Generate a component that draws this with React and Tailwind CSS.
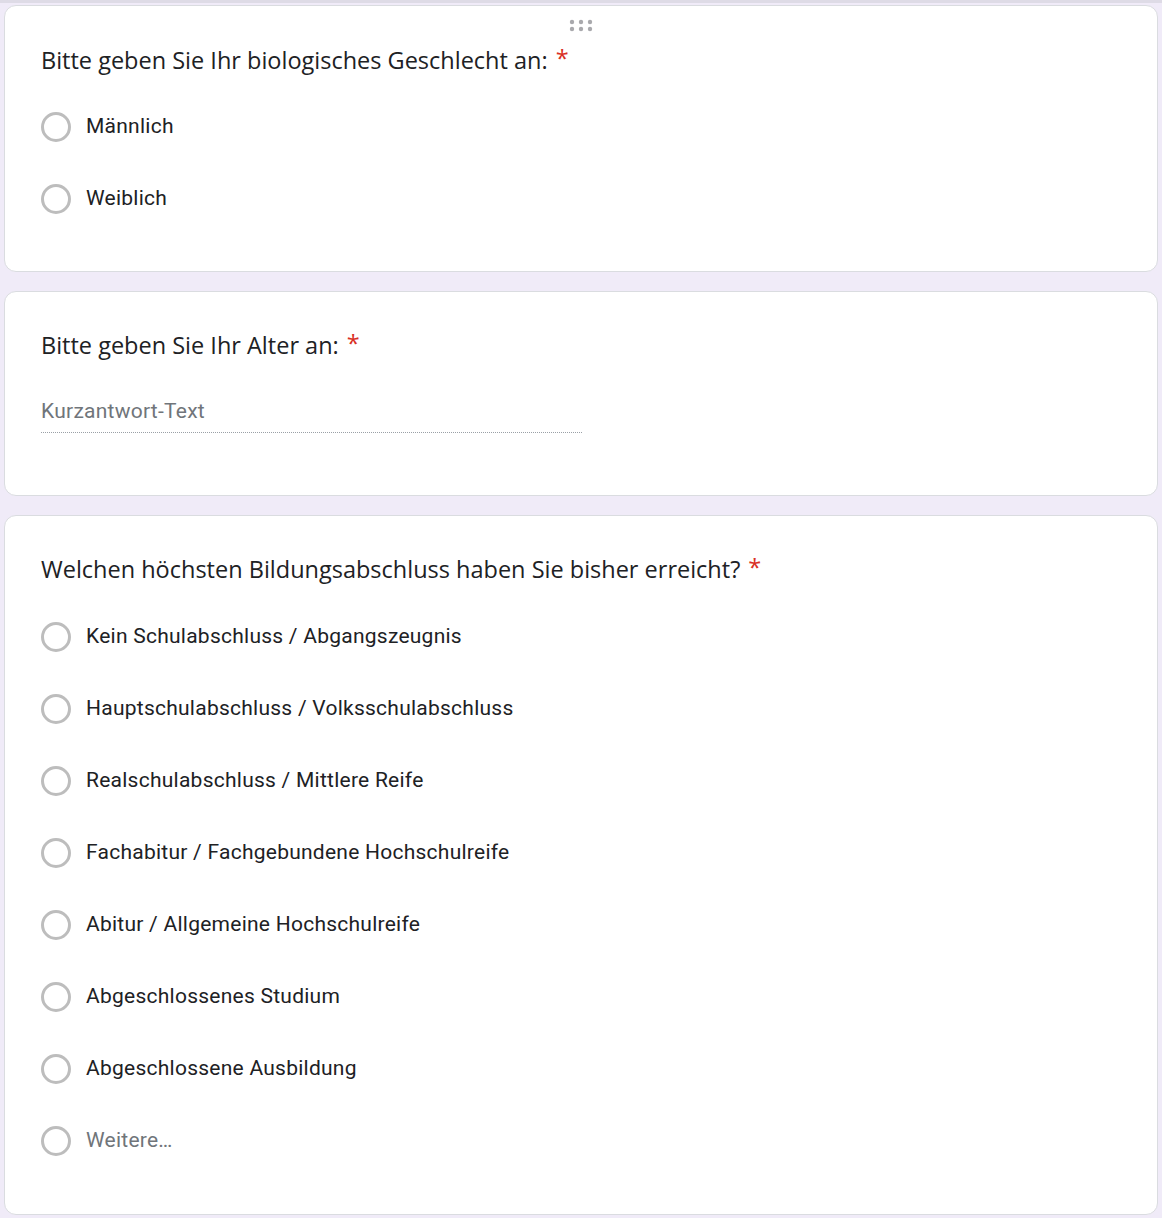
import React from 'react';

const titleFont = { fontFamily: '"Open Sans", "Noto Sans", sans-serif' };

const Radio = ({ label, muted }) => (
    <div className="h-[72px] flex items-center">
        <div className="w-[30px] h-[30px] rounded-full border-[3px] border-[#bdbdbd] shrink-0"></div>
        <span
            className={`ml-[15px] text-[21px] tracking-[0.25px] ${muted ? 'text-[#70757a]' : 'text-[#202124]'}`}
            style={{ fontFamily: 'Roboto, "Liberation Sans", sans-serif' }}
        >
            {label}
        </span>
    </div>
);

const Title = ({ children }) => (
    <div className="h-[36px] flex items-center text-[23.5px] text-[#202124] leading-[36px]" style={titleFont}>
        <span>{children}</span>
        <span className="text-[#d93025] pl-[8px] self-start leading-[32px]">*</span>
    </div>
);

const DragHandle = () => (
    <svg className="absolute left-1/2 top-[12px] -translate-x-1/2" width="26" height="16" viewBox="0 0 26 16">
        {[4, 13, 22].map((x) =>
            [4, 11].map((y) => <circle key={`${x}-${y}`} cx={x} cy={y} r="2.2" fill="#a9a9ad" />)
        )}
    </svg>
);

const App = () => {
    const degrees = [
        'Kein Schulabschluss / Abgangszeugnis',
        'Hauptschulabschluss / Volksschulabschluss',
        'Realschulabschluss / Mittlere Reife',
        'Fachabitur / Fachgebundene Hochschulreife',
        'Abitur / Allgemeine Hochschulreife',
        'Abgeschlossenes Studium',
        'Abgeschlossene Ausbildung',
    ];
    return (
        <div className="min-h-[1218px] bg-[#f0ebf8]">
            <div className="h-[3px] bg-[#dedbe6]"></div>
            <div className="px-[4px] pt-[2px] pb-[5px] flex flex-col gap-[19px]">
                <div className="relative bg-white border border-[#dadce0] rounded-[12px] px-[36px] pt-[36px] pb-[36px]">
                    <DragHandle />
                    <Title>Bitte geben Sie Ihr biologisches Geschlecht an:</Title>
                    <div className="mt-[13px]">
                        <Radio label="Männlich" />
                        <Radio label="Weiblich" />
                    </div>
                </div>
                <div className="bg-white border border-[#dadce0] rounded-[12px] px-[36px] pt-[35px] pb-[62px]">
                    <Title>Bitte geben Sie Ihr Alter an:</Title>
                    <div className="mt-[33px] w-[541px] border-b border-dotted border-[#9aa0a6] pb-[6px]">
                        <div
                            className="h-[30px] leading-[30px] text-[21px] tracking-[0.25px] text-[#70757a]"
                            style={{ fontFamily: 'Roboto, "Liberation Sans", sans-serif' }}
                        >
                            Kurzantwort-Text
                        </div>
                    </div>
                </div>
                <div className="bg-white border border-[#dadce0] rounded-[12px] px-[36px] pt-[35px] pb-[37px]">
                    <Title>Welchen höchsten Bildungsabschluss haben Sie bisher erreicht?</Title>
                    <div className="mt-[14px]">
                        {degrees.map((d) => (
                            <Radio key={d} label={d} />
                        ))}
                        <Radio label="Weitere…" muted />
                    </div>
                </div>
            </div>
        </div>
    );
};

export default App;
